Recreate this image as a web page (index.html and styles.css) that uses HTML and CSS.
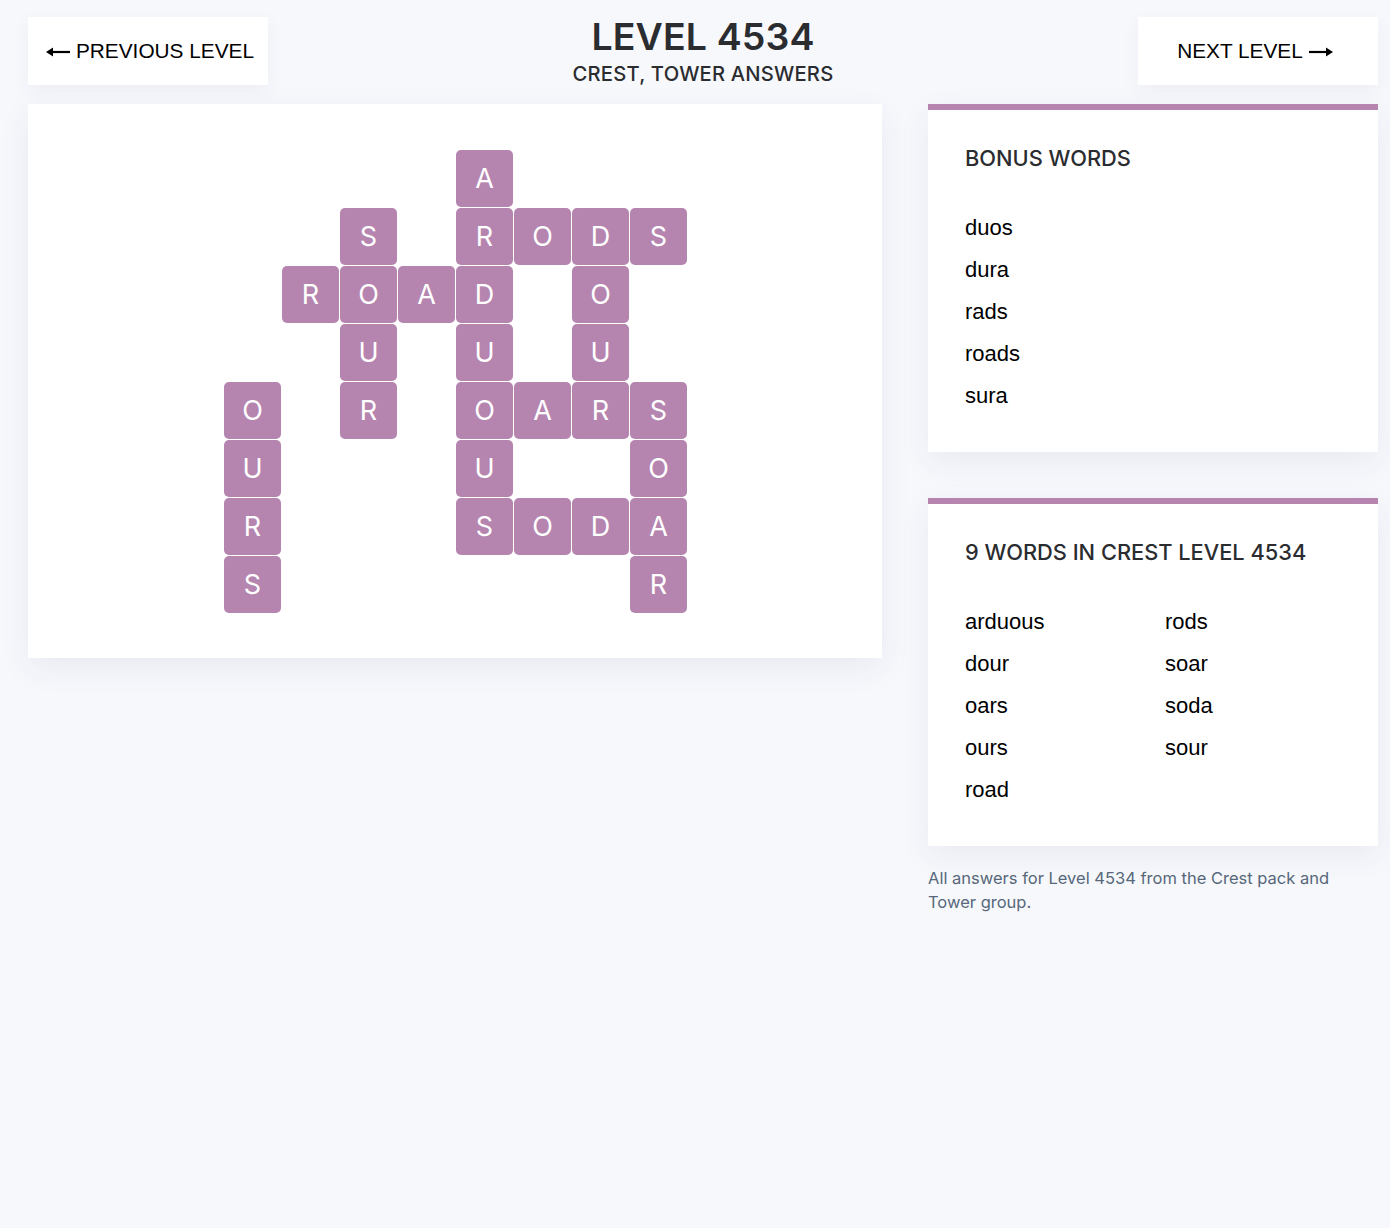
FILE: index.html
```html
<!DOCTYPE html>
<html lang="en">
<head>
<meta charset="utf-8">
<title>Level 4534 - Crest, Tower Answers</title>
<link rel="stylesheet" href="styles.css">
</head>
<body>
<div class="page">
  <header class="top">
    <a class="nav-btn prev" href="#">
      <svg class="arrow" width="24" height="12" viewBox="0 0 24 12"><path d="M24 6H5" stroke="#000" stroke-width="2.2" fill="none"/><path d="M0 6L7 1.5V10.5Z" fill="#000"/></svg>
      <span>PREVIOUS LEVEL</span>
    </a>
    <div class="title">
      <h1>LEVEL 4534</h1>
      <h2>CREST, TOWER ANSWERS</h2>
    </div>
    <a class="nav-btn next" href="#">
      <span>NEXT LEVEL</span>
      <svg class="arrow" width="24" height="12" viewBox="0 0 24 12"><path d="M0 6H19" stroke="#000" stroke-width="2.2" fill="none"/><path d="M24 6L17 1.5V10.5Z" fill="#000"/></svg>
    </a>
  </header>

  <main class="main">
    <section class="board">
      <div class="grid">
        <div class="tile" style="grid-column:5;grid-row:1">A</div>

        <div class="tile" style="grid-column:3;grid-row:2">S</div>
        <div class="tile" style="grid-column:5;grid-row:2">R</div>
        <div class="tile" style="grid-column:6;grid-row:2">O</div>
        <div class="tile" style="grid-column:7;grid-row:2">D</div>
        <div class="tile" style="grid-column:8;grid-row:2">S</div>

        <div class="tile" style="grid-column:2;grid-row:3">R</div>
        <div class="tile" style="grid-column:3;grid-row:3">O</div>
        <div class="tile" style="grid-column:4;grid-row:3">A</div>
        <div class="tile" style="grid-column:5;grid-row:3">D</div>
        <div class="tile" style="grid-column:7;grid-row:3">O</div>

        <div class="tile" style="grid-column:3;grid-row:4">U</div>
        <div class="tile" style="grid-column:5;grid-row:4">U</div>
        <div class="tile" style="grid-column:7;grid-row:4">U</div>

        <div class="tile" style="grid-column:1;grid-row:5">O</div>
        <div class="tile" style="grid-column:3;grid-row:5">R</div>
        <div class="tile" style="grid-column:5;grid-row:5">O</div>
        <div class="tile" style="grid-column:6;grid-row:5">A</div>
        <div class="tile" style="grid-column:7;grid-row:5">R</div>
        <div class="tile" style="grid-column:8;grid-row:5">S</div>

        <div class="tile" style="grid-column:1;grid-row:6">U</div>
        <div class="tile" style="grid-column:5;grid-row:6">U</div>
        <div class="tile" style="grid-column:8;grid-row:6">O</div>

        <div class="tile" style="grid-column:1;grid-row:7">R</div>
        <div class="tile" style="grid-column:5;grid-row:7">S</div>
        <div class="tile" style="grid-column:6;grid-row:7">O</div>
        <div class="tile" style="grid-column:7;grid-row:7">D</div>
        <div class="tile" style="grid-column:8;grid-row:7">A</div>

        <div class="tile" style="grid-column:1;grid-row:8">S</div>
        <div class="tile" style="grid-column:8;grid-row:8">R</div>
      </div>
    </section>

    <aside class="side">
      <div class="card">
        <h3>BONUS WORDS</h3>
        <ul class="words">
          <li>duos</li>
          <li>dura</li>
          <li>rads</li>
          <li>roads</li>
          <li>sura</li>
        </ul>
      </div>
      <div class="card">
        <h3>9 WORDS IN CREST LEVEL 4534</h3>
        <ul class="words two-col">
          <li>arduous</li>
          <li>dour</li>
          <li>oars</li>
          <li>ours</li>
          <li>road</li>
          <li>rods</li>
          <li>soar</li>
          <li>soda</li>
          <li>sour</li>
        </ul>
      </div>
      <p class="note">All answers for Level 4534 from the Crest pack and Tower group.</p>
    </aside>
  </main>
</div>
</body>
</html>
```

FILE: styles.css
```css
* { box-sizing: border-box; }

html, body {
  margin: 0;
  padding: 0;
  background: #f7f8fc;
}

body {
  font-family: Inter, "Noto Sans", sans-serif;
  color: #2a2c30;
}

.page {
  width: 1350px;
  margin-left: 28px;
  padding-top: 17px;
}

.top {
  display: flex;
  align-items: flex-start;
  justify-content: space-between;
}

.nav-btn {
  width: 240px;
  height: 68px;
  background: #fff;
  display: flex;
  align-items: center;
  justify-content: center;
  gap: 6px;
  text-decoration: none;
  color: #000;
  font-family: "Liberation Sans", Arial, sans-serif;
  font-size: 20.8px;
  box-shadow: 0 6px 18px rgba(40, 50, 100, 0.05);
}

.nav-btn.prev { padding-left: 4px; }
.nav-btn.next { padding-right: 6px; }

.nav-btn .arrow { display: block; margin-top: 1px; }

.title {
  text-align: center;
}

.title h1 {
  margin: 0;
  font-size: 37.5px;
  font-weight: 600;
  line-height: 40px;
  color: #2a2c30;
  letter-spacing: 0.1px;
}

.title h2 {
  margin: 5px 0 0;
  font-size: 20.2px;
  font-weight: 500;
  line-height: 24px;
  color: #2a2c30;
  letter-spacing: 0.2px;
}

.main {
  display: flex;
  gap: 46px;
  align-items: flex-start;
  margin-top: 18px;
}

.board {
  width: 854px;
  height: 554px;
  background: #fff;
  box-shadow: 0 10px 30px rgba(40, 50, 100, 0.07);
  display: flex;
  justify-content: center;
  padding-top: 46px;
  padding-left: 1px;
}

.grid {
  display: grid;
  grid-template-columns: repeat(8, 57px);
  grid-template-rows: repeat(8, 57px);
  gap: 1px;
}

.tile {
  background: #b585b0;
  border-radius: 5px;
  color: #fff;
  font-size: 27px;
  font-weight: 400;
  display: flex;
  align-items: center;
  justify-content: center;
  line-height: 1;
}

.side {
  width: 450px;
  display: flex;
  flex-direction: column;
  gap: 46px;
}

.card {
  background: #fff;
  border-top: 6px solid #b585b0;
  padding: 34px 37px 35px;
  box-shadow: 0 10px 30px rgba(40, 50, 100, 0.07);
}

.card h3 {
  margin: 0;
  font-size: 21.8px;
  font-weight: 500;
  line-height: 28px;
  color: #2a2c30;
}

.words {
  list-style: none;
  margin: 35px 0 0;
  padding: 0;
  font-family: "Liberation Sans", Arial, sans-serif;
  font-size: 22px;
  color: #000;
}

.words li {
  height: 42px;
  line-height: 42px;
}

.two-col {
  display: grid;
  grid-template-columns: 200px 200px;
  grid-template-rows: repeat(5, 42px);
  grid-auto-flow: column;
}

.note {
  margin: -26px 0 0;
  font-size: 16.5px;
  line-height: 24px;
  color: #56687a;
}
```
